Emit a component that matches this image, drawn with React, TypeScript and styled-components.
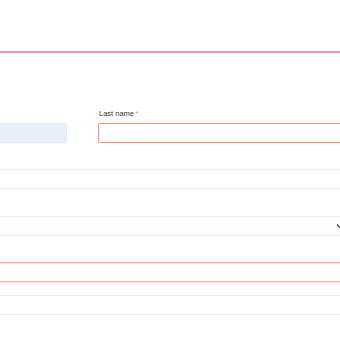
import React from "react";
import styled, { createGlobalStyle } from "styled-components";

const Global = createGlobalStyle`
  html, body { margin: 0; padding: 0; background: #ffffff; overflow: hidden; }
  body { font-family: "Liberation Sans", Arial, sans-serif; width: 340px; height: 340px; }
`;

const Page = styled.div`
  width: 340px;
  height: 340px;
  overflow: hidden;
`;

const Header = styled.header`
  height: 51px;
  border-bottom: 2px solid #ff8db6;
`;

const Form = styled.form`
  width: 420px;
  margin-left: -20px;
  padding-top: 56px;
  display: flex;
  flex-direction: column;
`;

const NameRow = styled.div`
  display: grid;
  grid-template-columns: 87px 1fr;
  column-gap: 31px;
  align-items: end;
`;

const Field = styled.div`
  display: flex;
  flex-direction: column;
`;

const Label = styled.label`
  font-size: 7.5px;
  line-height: 9px;
  color: #333333;
  margin-bottom: 5px;
  margin-left: 1px;
`;

const Req = styled.span`
  color: #ff7a6b;
  margin-left: 1.5px;
`;

const Input = styled.div<{ $tone?: "autofill" | "error" | "plain" | "select"; $mt?: number }>`
  box-sizing: border-box;
  height: 20px;
  margin-top: ${(p) => p.$mt ?? 0}px;
  border-radius: 2px;
  border: 1px solid
    ${(p) =>
      p.$tone === "autofill"
        ? "#e3ebf9"
        : p.$tone === "error"
        ? "#ffb09c"
        : "#ececec"};
  box-shadow: ${(p) => (p.$tone === "error" ? "0 1px 0 #ffe3dc, inset 0 1px 0 #ffe3dc" : "none")};
  background: ${(p) =>
    p.$tone === "autofill" ? "#e8effc" : p.$tone === "select" ? "#fdfdfd" : "#ffffff"};
  position: relative;
`;

const LastInput = styled.div`
  box-sizing: border-box;
  height: 20px;
  border: 1px solid #ff8c6b;
  border-radius: 2px;
  background: #ffffff;
`;

const Chevron = styled.svg`
  position: absolute;
  left: 355px;
  top: 5px;
`;

export default function App() {
  return (
    <Page>
      <Global />
      <Header />
      <Form>
        <NameRow>
          <Field>
            <Input $tone="autofill" />
          </Field>
          <Field>
            <Label>
              Last name<Req>*</Req>
            </Label>
            <LastInput />
          </Field>
        </NameRow>
        <Input $tone="plain" $mt={26} />
        <Input $tone="select" $mt={27}>
          <Chevron width="8" height="8" viewBox="0 0 8 8">
            <path d="M1 2.5 L4 5.5 L7 2.5" fill="none" stroke="#333" strokeWidth="1.2" />
          </Chevron>
        </Input>
        <Input $tone="error" $mt={26} />
        <Input $tone="plain" $mt={13} />
      </Form>
    </Page>
  );
}
